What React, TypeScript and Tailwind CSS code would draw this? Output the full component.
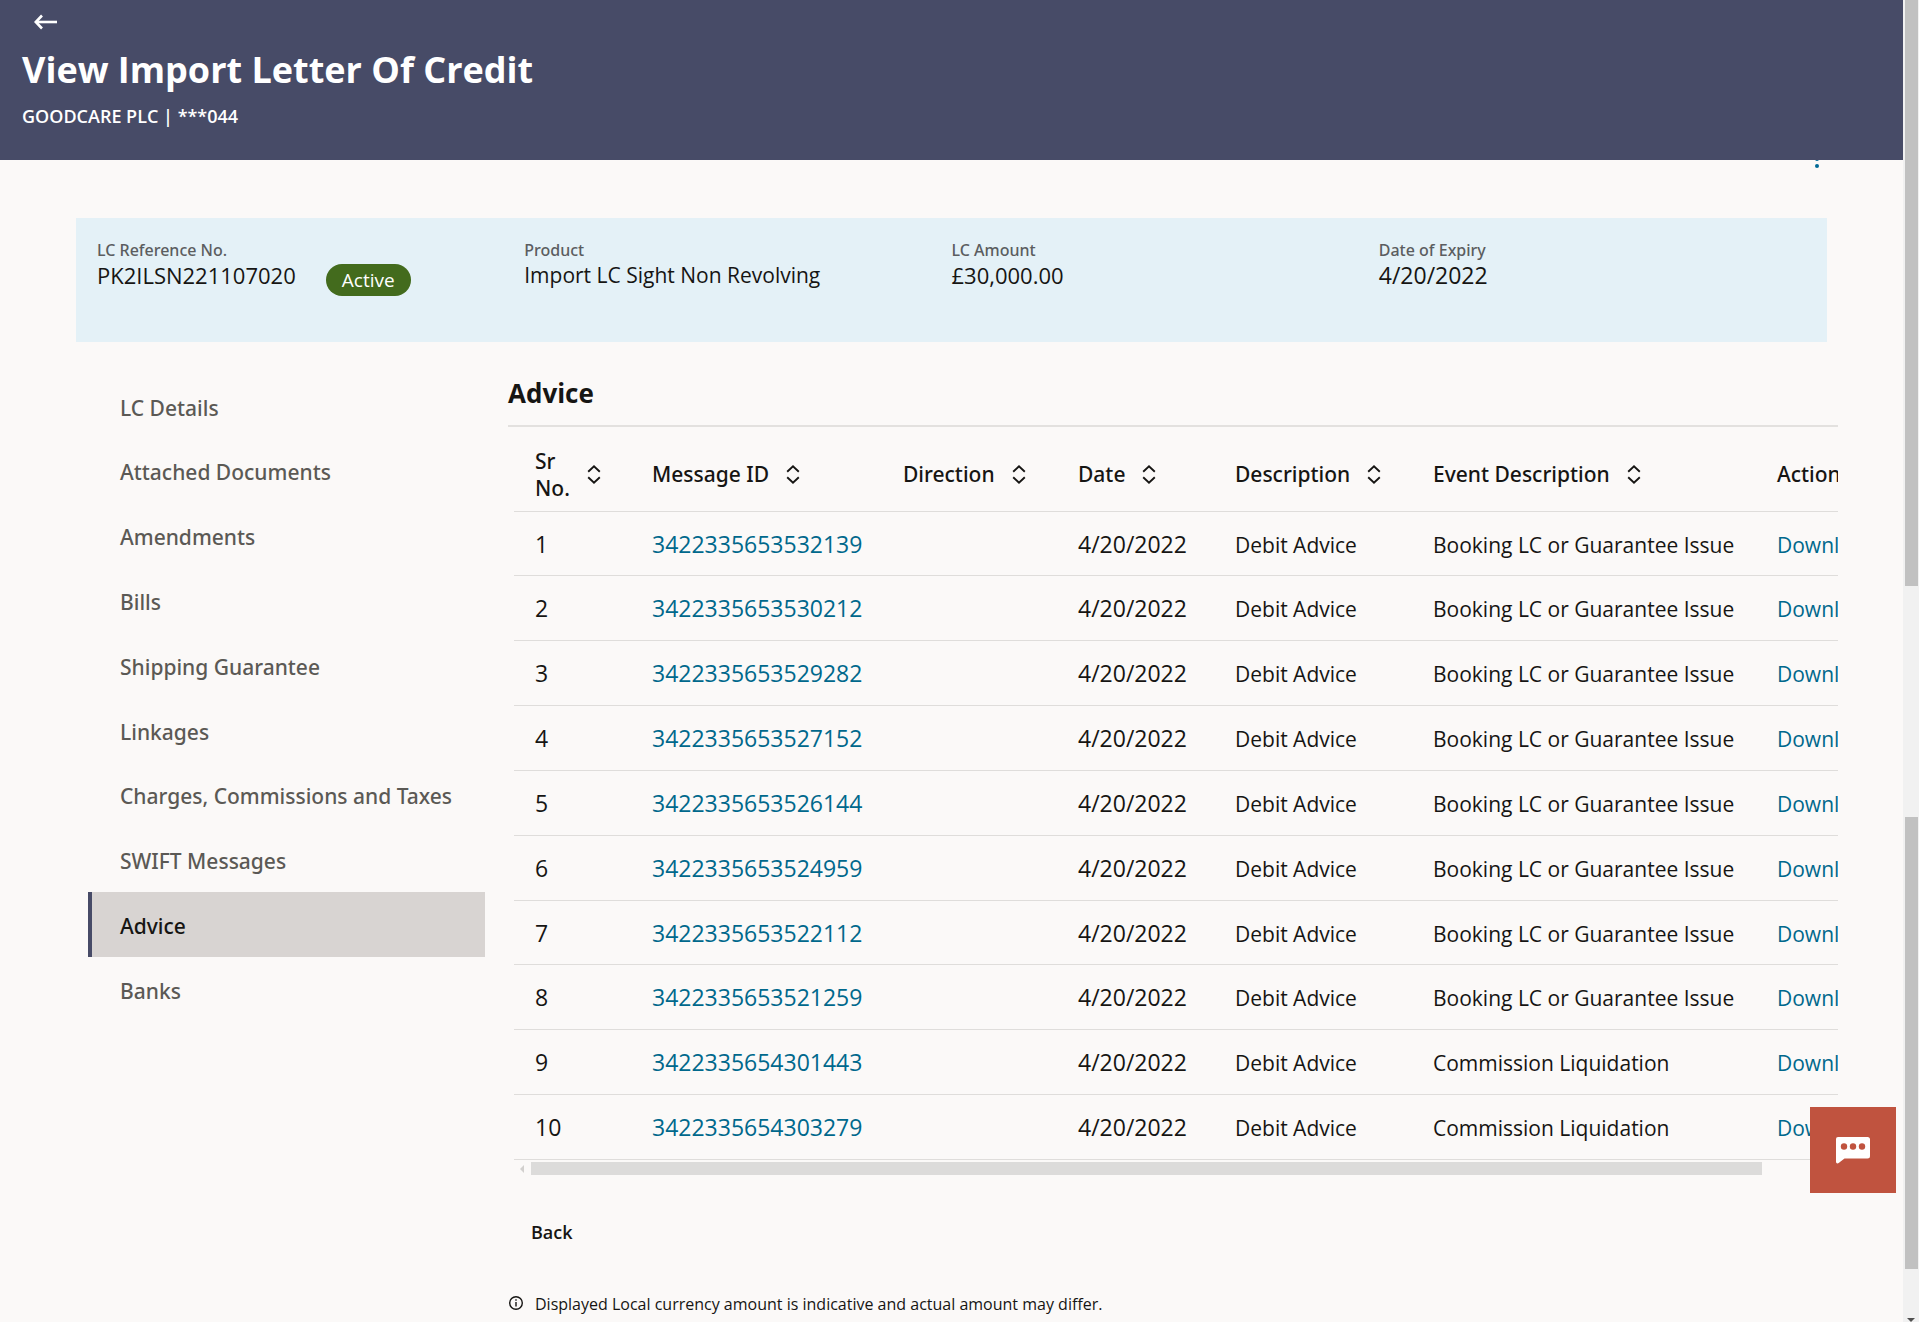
const navItems = [
  "LC Details",
  "Attached Documents",
  "Amendments",
  "Bills",
  "Shipping Guarantee",
  "Linkages",
  "Charges, Commissions and Taxes",
  "SWIFT Messages",
  "Advice",
  "Banks",
];

const summary = [
  { label: "LC Reference No.", value: "PK2ILSN221107020", status: "Active", size: "text-[22px] leading-7" },
  { label: "Product", value: "Import LC Sight Non Revolving", size: "text-[21px] leading-7" },
  { label: "LC Amount", value: "£30,000.00", size: "text-[22px] leading-7" },
  { label: "Date of Expiry", value: "4/20/2022", size: "text-[23px] leading-7" },
];

const booking = "Booking LC or Guarantee Issue";
const commission = "Commission Liquidation";

const rows = [
  { id: "3422335653532139", event: booking },
  { id: "3422335653530212", event: booking },
  { id: "3422335653529282", event: booking },
  { id: "3422335653527152", event: booking },
  { id: "3422335653526144", event: booking },
  { id: "3422335653524959", event: booking },
  { id: "3422335653522112", event: booking },
  { id: "3422335653521259", event: booking },
  { id: "3422335654301443", event: commission },
  { id: "3422335654303279", event: commission },
];

const columns = ["Message ID", "Direction", "Date", "Description", "Event Description"];

const headCell = "pl-[21px] pt-3 font-medium";
const textCell = "pl-[21px] pt-[18px] pb-4 align-baseline text-[21px] leading-7";
const numberCell = "pl-[21px] pt-[18px] pb-4 align-baseline text-[23px] leading-7";

function SortIcon() {
  return (
    <svg width="14" height="20" viewBox="0 0 14 20" fill="none" stroke="currentColor" strokeWidth="1.9" aria-hidden="true">
      <path d="M1.200 6.700 7 1.300l5.800 5.400" />
      <path d="M1.200 12.300 7 17.700l5.800-5.400" />
    </svg>
  );
}

function Header() {
  return (
    <header className="relative z-10 h-40 bg-[#474b67] px-[22px] pt-[13px] text-white">
      <button type="button" aria-label="Go back" className="ml-[11px] block">
        <svg width="26" height="18" viewBox="0 0 26 18" fill="none" stroke="currentColor" strokeWidth="2.6" aria-hidden="true">
          <path d="M24 9H3" />
          <path d="M9 2.500 2.800 9 9 15.500" />
        </svg>
      </button>
      <h1 className="mt-[15px] text-[36px] font-bold leading-[48px]">View Import Letter Of Credit</h1>
      <p className="mt-[10px] text-[18px] font-semibold leading-6">GOODCARE PLC | ***044</p>
    </header>
  );
}

function Summary() {
  return (
    <dl className="grid h-[124px] grid-cols-4 bg-[#e4f1f7] px-[21px] pt-[21px]">
      {summary.map((s) => (
        <div key={s.label} className="flex items-start gap-[30px]">
          <div>
            <dt className="font-['Noto_Sans'] text-[16px] font-medium leading-[22px] text-[#5b5d60]">{s.label}</dt>
            <dd className={s.size}>{s.value}</dd>
          </div>
          {s.status && (
            <dd className="mt-[25px] flex h-8 items-center rounded-full bg-[#436b1d] px-4 text-[19px] leading-6 text-white">
              {s.status}
            </dd>
          )}
        </div>
      ))}
    </dl>
  );
}

function SideNav() {
  return (
    <nav aria-label="Letter of credit sections" className="w-[397px] shrink-0 pt-8 font-['Noto_Sans'] text-[21px] font-medium">
      <ul className="grid h-[648px] auto-rows-fr">
        {navItems.map((item) => (
          <li key={item} className="flex">
            <a
              href="#"
              aria-current={item === "Advice" ? "page" : undefined}
              className={
                item === "Advice"
                  ? "flex flex-1 items-center border-l-4 border-[#474b67] bg-[#d8d4d2] pl-7 pt-1 text-[#161513]"
                  : "flex flex-1 items-center border-l-4 border-transparent pl-7 pt-1 text-[#5b5955]"
              }
            >
              {item}
            </a>
          </li>
        ))}
      </ul>
    </nav>
  );
}

function AdviceTable() {
  return (
    <div className="ml-1.5 overflow-hidden">
      <table className="h-[733px] w-[1380px] table-fixed text-left">
        <colgroup>
          <col className="w-[117px]" />
          <col className="w-[251px]" />
          <col className="w-[175px]" />
          <col className="w-[157px]" />
          <col className="w-[198px]" />
          <col className="w-[344px]" />
          <col />
        </colgroup>
        <thead>
          <tr className="h-[84px] border-b border-[#dfdddb] font-['Noto_Sans'] text-[21px] leading-[27px]">
            <th scope="col" className={headCell}>
              <button type="button" className="flex items-center gap-4 text-left">
                <span className="w-9">Sr No.</span>
                <SortIcon />
              </button>
            </th>
            {columns.map((c) => (
              <th key={c} scope="col" className={headCell}>
                <button type="button" className="flex items-center gap-[17px] whitespace-nowrap">
                  {c}
                  <SortIcon />
                </button>
              </th>
            ))}
            <th scope="col" className={headCell}>Action</th>
          </tr>
        </thead>
        <tbody>
          {rows.map((r, i) => (
            <tr key={r.id} className="border-b border-[#dfdddb]">
              <td className={numberCell}>{i + 1}</td>
              <td className={numberCell}>
                <a href="#" className="text-[#00688c]">{r.id}</a>
              </td>
              <td />
              <td className={numberCell}>4/20/2022</td>
              <td className={textCell}>Debit Advice</td>
              <td className={textCell}>{r.event}</td>
              <td className={textCell}>
                <a href="#" className="text-[#00688c]">Download</a>
              </td>
            </tr>
          ))}
        </tbody>
      </table>
      <div className="mt-0.5 flex h-[13px] items-center gap-[7px] pl-1.5 pr-[76px]">
        <span className="h-0 w-0 border-y-4 border-r-4 border-y-transparent border-r-[#d2d0ce]" />
        <span className="h-full flex-1 bg-[#dcdbda]" />
      </div>
    </div>
  );
}

function ScrollTrack() {
  return (
    <div aria-hidden="true" className="flex w-4 shrink-0 flex-col items-center bg-[#f1f1f1]">
      <span className="h-[586px] w-[13px] bg-[#c1c1c1]" />
      <span className="mt-[231px] h-[452px] w-[13px] bg-[#c1c1c1]" />
      <span className="mt-auto h-0 w-0 border-x-4 border-t-4 border-x-transparent border-t-[#505050]" />
    </div>
  );
}

export default function App() {
  return (
    <div className="flex min-h-screen overflow-hidden bg-[#fbf9f8] font-['Open_Sans','Noto_Sans',sans-serif] text-[#161513]">
      <div className="relative min-w-0 flex-1">
        <Header />
        <button type="button" aria-label="More options" className="absolute right-[82px] top-[148px] text-[#006a96]">
          <svg width="8" height="22" viewBox="0 0 8 22" fill="currentColor" aria-hidden="true">
            <circle cx="4" cy="4" r="2" />
            <circle cx="4" cy="11" r="2" />
            <circle cx="4" cy="18" r="2" />
          </svg>
        </button>
        <div className="px-[76px] pt-[58px]">
          <Summary />
        </div>
        <div className="flex gap-[23px] pl-[88px] pr-[65px]">
          <SideNav />
          <main className="min-w-0 flex-1 pt-8">
            <h2 className="border-b-2 border-[#e3e1df] pb-[13px] text-[26px] font-bold leading-[38px]">Advice</h2>
            <AdviceTable />
            <button type="button" className="ml-[23px] mt-[45px] block text-[18px] font-semibold leading-6">
              Back
            </button>
            <p className="mt-12 flex items-center gap-[11px] text-[16px] leading-6">
              <svg width="16" height="16" viewBox="0 0 16 16" fill="none" stroke="currentColor" strokeWidth="1.4" aria-hidden="true">
                <circle cx="8" cy="7" r="6.3" />
                <path d="M8 6v4.600M8 3.200v1.500" />
              </svg>
              Displayed Local currency amount is indicative and actual amount may differ.
            </p>
          </main>
        </div>
        <button
          type="button"
          aria-label="Open chat"
          className="absolute right-[7px] top-[1107px] flex h-[86px] w-[86px] items-center justify-center bg-[#c0533f] text-white"
        >
          <svg width="36" height="28" viewBox="0 0 36 28" aria-hidden="true">
            <path fill="currentColor" d="M3 1h29.500a2.500 2.500 0 0 1 2.500 2.500v16.500a2.500 2.500 0 0 1-2.500 2.500H9.500L4 26.800C2.500 28 1 27.500 1 25.500V3a2 2 0 0 1 2-2Z" />
            <circle cx="9" cy="10.500" r="3.200" fill="#c0533f" />
            <circle cx="18" cy="10.500" r="3.200" fill="#c0533f" />
            <circle cx="27" cy="10.500" r="3.200" fill="#c0533f" />
          </svg>
        </button>
      </div>
      <ScrollTrack />
    </div>
  );
}
